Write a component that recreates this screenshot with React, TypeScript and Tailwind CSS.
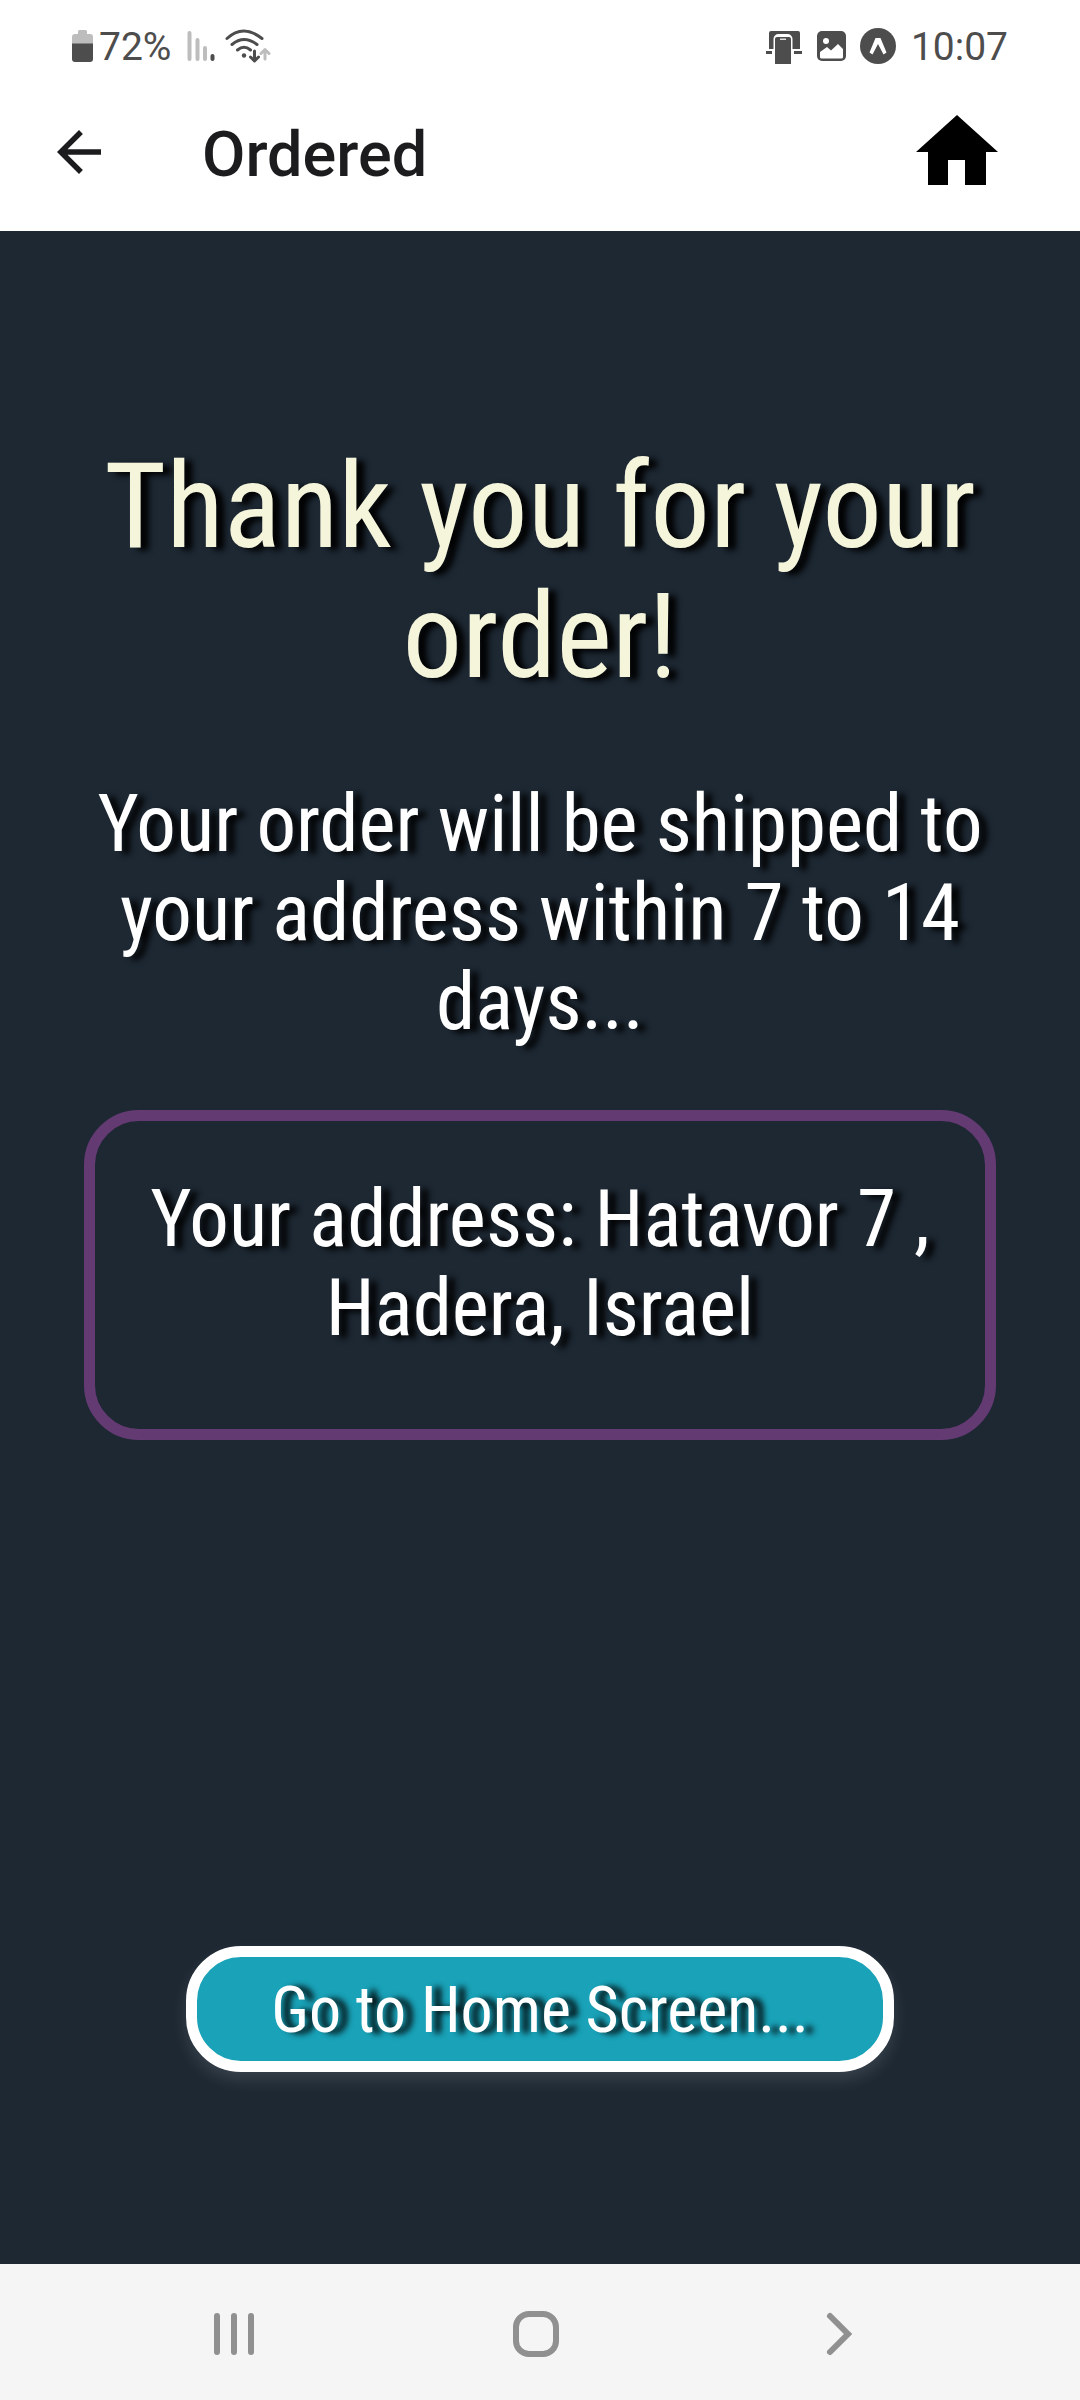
import React from "react";

function StatusBar() {
  return (
    <div className="flex h-[92px] items-center justify-between px-[72px] font-[Roboto,sans-serif] text-[39px] leading-none text-[#4d4d4d]">
      <div className="flex items-center">
        <svg className="h-[32px] w-[21px]" viewBox="0 0 21 32" aria-hidden="true">
          <path d="M6 1.500a1.500 1.500 0 0 1 1.500-1.500h6a1.500 1.500 0 0 1 1.500 1.500V4h3a3 3 0 0 1 3 3v7H0V7a3 3 0 0 1 3-3h3z" fill="#bdbdbd" />
          <path d="M0 13.500h21V29a3 3 0 0 1-3 3H3a3 3 0 0 1-3-3z" fill="#4d4d4d" />
        </svg>
        <span className="ml-[6px] mt-[2px]">72%</span>
        <svg className="ml-[16px] h-[32px] w-[28px]" viewBox="0 0 28 32" fill="none" strokeLinecap="round" strokeWidth="4" aria-hidden="true">
          <path d="M2.500 3v26M10.500 10v19M18 18v11" stroke="#bdbdbd" />
          <path d="M25.500 26v3" stroke="#4d4d4d" />
        </svg>
        <svg className="ml-[10px] h-[34px] w-[46px]" viewBox="0 0 46 34" fill="none" strokeLinecap="round" strokeWidth="3" aria-hidden="true">
          <path d="M2 9.500Q18-5.500 37 9.500M7 15.500Q19 5.500 32 15.500M12.500 21Q19 15.500 25.500 21" stroke="#4d4d4d" />
          <circle cx="19" cy="26.500" r="2.200" fill="#4d4d4d" />
          <path d="M29.500 22v9M25.500 28l4 4 4-4" stroke="#4d4d4d" strokeLinejoin="round" />
          <path d="M40 30v-9M36 24.500l4-4 4 4" stroke="#bdbdbd" strokeLinejoin="round" />
        </svg>
      </div>
      <div className="flex items-center">
        <svg className="h-[36px] w-[36px]" viewBox="0 0 36 36" aria-hidden="true">
          <path d="M3 21V5a2 2 0 0 1 2-2h27a2 2 0 0 1 2 2v16z" fill="#4d4d4d" />
          <path d="M6 36V22.500h1.500V11a5 5 0 0 1 5-5h9a5 5 0 0 1 5 5v11.500H28V36z" fill="#fff" />
          <path d="M0 23h6v3H0zM28 23h8v3h-8z" fill="#4d4d4d" />
          <path d="M9 36V11a2 2 0 0 1 2-2h12a2 2 0 0 1 2 2v25z" fill="#4d4d4d" />
          <path d="M14 10.500h6V12h-6z" fill="#ddd" />
        </svg>
        <svg className="ml-[15px] h-[30px] w-[29px]" viewBox="0 0 29 30" aria-hidden="true">
          <rect width="29" height="30" rx="5" fill="#4d4d4d" />
          <circle cx="9" cy="10" r="3" fill="#fff" />
          <path d="M3 26v-5l7-5 4 3.500L21 13l5 5v8a1.500 1.500 0 0 1-1.500 1.500h-20A1.500 1.500 0 0 1 3 26z" fill="#fff" />
        </svg>
        <svg className="ml-[14px] h-[36px] w-[36px]" viewBox="0 0 36 36" aria-hidden="true">
          <circle cx="18" cy="18" r="18" fill="#4d4d4d" />
          <path d="M15.500 10h5l6 14.500-3 2L18 16l-5.500 10.500-3-2z" fill="#fff" />
        </svg>
        <time className="ml-[15px] mt-[2px]">10:07</time>
      </div>
    </div>
  );
}

function AppBar() {
  return (
    <header className="flex h-[139px] items-center bg-white pl-[46px] pr-[82px] font-[Roboto,sans-serif] text-[#1c1c1e]">
      <button type="button" aria-label="Go back" className="mb-[20px]">
        <svg className="h-[66px] w-[66px]" viewBox="0 0 24 24" fill="currentColor">
          <path d="M20 11H7.830l5.590-5.590L12 4l-8 8 8 8 1.410-1.410L7.830 13H20z" />
        </svg>
      </button>
      <h1 className="mb-[14px] ml-[90px] grow text-[63px] font-medium leading-[72px]">Ordered</h1>
      <button type="button" aria-label="Home" className="mb-[24px]">
        <svg className="h-[70px] w-[82px] text-black" viewBox="0 0 82 70" fill="currentColor">
          <path d="M41 0l41 37H70v33H49V45H32v25H12V37H0z" />
        </svg>
      </button>
    </header>
  );
}

function NavigationBar() {
  return (
    <nav className="flex h-[136px] items-center justify-between bg-[#f5f5f5] pl-[204px] pr-[210px] pt-[4px] text-[#909090]">
      <button type="button" aria-label="Recent apps">
        <svg className="h-[60px] w-[60px]" viewBox="0 0 60 60" fill="none" stroke="currentColor" strokeWidth="6" strokeLinecap="round">
          <path d="M13 12v36M30 12v36M47 12v36" />
        </svg>
      </button>
      <button type="button" aria-label="Home">
        <svg className="h-[60px] w-[60px]" viewBox="0 0 60 60" fill="none" stroke="currentColor" strokeWidth="6">
          <rect x="9" y="10" width="40" height="40" rx="13" />
        </svg>
      </button>
      <button type="button" aria-label="Back">
        <svg className="h-[60px] w-[60px]" viewBox="0 0 60 60" fill="none" stroke="currentColor" strokeWidth="6" strokeLinecap="round">
          <path d="M20 12l18 18-18 18" />
        </svg>
      </button>
    </nav>
  );
}

export default function App() {
  return (
    <div className="flex min-h-screen flex-col bg-white">
      <StatusBar />
      <AppBar />
      <main className="flex grow flex-col items-center bg-[#1d2833] px-[84px] text-center font-['Roboto_Condensed','Liberation_Sans_Narrow',Roboto,sans-serif] text-white [text-shadow:8px_3px_6px_#000]">
        <h2 className="mt-[211px] text-[119px] leading-[130px] text-[#f5f5dc]">Thank you for your order!</h2>
        <p className="mt-[78px] text-[79px] leading-[89px]">
          Your order will be shipped to your address within 7 to 14 days...
        </p>
        <div className="mt-[63px] w-full rounded-[55px] border-[11px] border-[#643a73] px-[44px] pb-[76px] pt-[54px]">
          <p className="text-[79px] leading-[89px]">Your address: Hatavor 7 , Hadera, Israel</p>
        </div>
        <button
          type="button"
          className="mb-[192px] mt-auto h-[126px] rounded-[55px] border-[11px] border-white bg-[#19a2b8] px-[74px] pt-[4px] text-[64px] leading-[80px] shadow-[0_8px_16px_rgba(255,255,255,0.12)] [text-shadow:9px_1px_6px_#000]"
        >
          Go to Home Screen...
        </button>
      </main>
      <NavigationBar />
    </div>
  );
}
